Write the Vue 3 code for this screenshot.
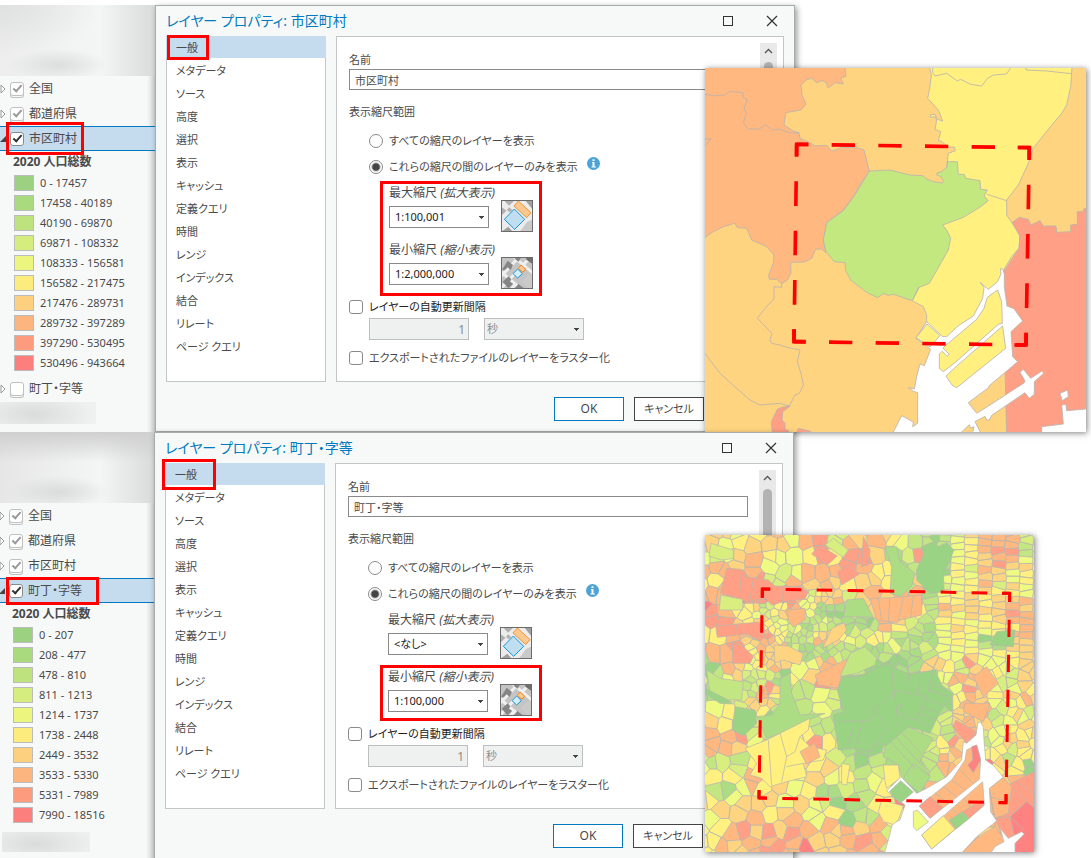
<script setup>
const palette = ['#9bd384', '#acdc84', '#c2e782', '#d8ef80', '#effa82', '#fff080', '#ffd480', '#ffb880', '#ff9f85', '#ff8282']
const swatches = ['#9bd181', '#a9da7e', '#bee37e', '#d5ed7e', '#ecf67e', '#fcec7e', '#fcd07e', '#fcb57e', '#fc9b7e', '#fc7f7e']

const navItems = ['一般', 'メタデータ', 'ソース', '高度', '選択', '表示', 'キャッシュ', '定義クエリ', '時間', 'レンジ', 'インデックス', '結合', 'リレート', 'ページ クエリ']

const scenes = [
  {
    id: 'city',
    title: '市区町村',
    layers: [
      { name: '全国', dim: true, checked: true },
      { name: '都道府県', dim: true, checked: true },
      { name: '市区町村', selected: true, checked: true }
    ],
    classes: ['0 - 17457', '17458 - 40189', '40190 - 69870', '69871 - 108332', '108333 - 156581', '156582 - 217475', '217476 - 289731', '289732 - 397289', '397290 - 530495', '530496 - 943664'],
    after: [{ name: '町丁・字等', dim: true, checked: false }],
    max: '1:100,001',
    min: '1:2,000,000'
  },
  {
    id: 'town',
    title: '町丁・字等',
    layers: [
      { name: '全国', dim: true, checked: true },
      { name: '都道府県', dim: true, checked: true },
      { name: '市区町村', dim: true, checked: true },
      { name: '町丁・字等', selected: true, checked: true }
    ],
    classes: ['0 - 207', '208 - 477', '478 - 810', '811 - 1213', '1214 - 1737', '1738 - 2448', '2449 - 3532', '3533 - 5330', '5331 - 7989', '7990 - 18516'],
    after: [],
    max: '<なし>',
    min: '1:100,000'
  }
]

// Population class of each block of the town map, 41 units per block.
const blocks = [
  '654676577377664312467773',
  '446764558578623701456765',
  '776753467787651201546645',
  '588833767656762613456454',
  '778888746646777714565666',
  '876535741122777626565677',
  '887654323211175315654567',
  '577675226633541214541165',
  '778566211221111124564556',
  '177466456732101156374436',
  '336231567700000014677345',
  '133376223300000003576456',
  '552662123300000001677254',
  '650311132200000113676345',
  '677321552200000232883465',
  '765455576510021135665535',
  '332555655210111237689550',
  '553655567352251127666688',
  '313655451133350077677788',
  '655754633112558887777788',
  '466756744512255555577789',
  '567676776776635555777899',
  '576777786677736555778899'
]

// Number of towns inside each block.
const density = (c, r) => {
  if (c >= 3 && c <= 9 && r >= 4 && r <= 8) return 4
  if (c >= 3 && c <= 5 && r >= 9 && r <= 12) return 3
  if (c >= 16 && r <= 16) return 2
  if (c >= 9 && c <= 18 && r >= 5 && r <= 9) return 2
  return 1
}

let seed = 20201
const rnd = () => {
  seed = (seed * 1103515245 + 12345) % 2147483648
  return seed / 2147483648
}

const sites = []
for (let r = -1; r < 24; r++) {
  for (let c = -1; c < 25; c++) {
    const n = density(c, r)
    const row = blocks[Math.min(22, Math.max(0, r))]
    const base = Number(row[Math.min(23, Math.max(0, c))])
    for (let k = 0; k < n; k++) {
      // Two towns in a block lie one over the other, as the street blocks do.
      const cols = n > 2 ? 2 : 1
      const rows = n > 1 ? 2 : 1
      const w = 41 / cols
      const h = 41 / rows
      const jitter = c >= 17 && r < 9 ? 0.15 : 0.9
      const x = 15 + c * 41 + w * ((k % cols) + 0.5 + (rnd() - 0.5) * jitter) + (n === 1 && r % 2 ? 8 : 0)
      const y = 15 + r * 41 + h * (Math.floor(k / cols) + 0.5 + (rnd() - 0.5) * jitter) + (c >= 17 ? (c - 17) * 4 : 0)
      const t = rnd()
      const shift = base === 0 ? 0 : t < 0.16 ? -1 : t > 0.84 ? 1 : 0
      sites.push({ x, y, k: Math.min(9, Math.max(0, base + shift)) })
    }
  }
}

// Cell of one site: a square cut by the bisector to every nearby site.
const cellOf = (s) => {
  let poly = [[s.x - 60, s.y - 60], [s.x + 60, s.y - 60], [s.x + 60, s.y + 60], [s.x - 60, s.y + 60]]
  for (const o of sites) {
    const dx = o.x - s.x
    const dy = o.y - s.y
    if (o === s || Math.abs(dx) > 120 || Math.abs(dy) > 120) continue
    const mid = (dx * (o.x + s.x) + dy * (o.y + s.y)) / 2
    const out = []
    for (let i = 0; i < poly.length; i++) {
      const a = poly[i]
      const b = poly[(i + 1) % poly.length]
      const da = a[0] * dx + a[1] * dy - mid
      const db = b[0] * dx + b[1] * dy - mid
      if (da <= 0) out.push(a)
      if (da < 0 !== db < 0) {
        const f = da / (da - db)
        out.push([a[0] + (b[0] - a[0]) * f, a[1] + (b[1] - a[1]) * f])
      }
    }
    poly = out
    if (!poly.length) break
  }
  return poly
}

const towns = palette.map((fill, k) => ({
  fill,
  d: sites
    .filter((s) => s.k === k)
    .map((s) => 'M' + cellOf(s).map((p) => p[0].toFixed(1) + ',' + p[1].toFixed(1)).join('L') + 'Z')
    .join('')
}))
</script>

<template>
  <main class="page">
    <section v-for="s in scenes" :key="s.id" class="scene" :class="s.id">
      <aside class="contents">
        <div class="smudge top"></div>
        <label v-for="l in s.layers" :key="l.name" class="layer" :class="{ selected: l.selected, dim: l.dim }">
          <svg class="twisty" viewBox="0 0 6 10">
            <path v-if="l.selected" d="M6 2v6H0z" fill="#444" />
            <path v-else d="M1 1l4 4-4 4z" fill="#fff" stroke="#999" />
          </svg>
          <input type="checkbox" class="tick" :checked="l.checked" />
          <span>{{ l.name }}</span>
        </label>
        <h3 class="legend-title">2020 人口総数</h3>
        <ul class="legend">
          <li v-for="(c, i) in s.classes" :key="c">
            <svg class="swatch" viewBox="0 0 20 16"><rect x="0.5" y="0.5" width="19" height="15" :fill="swatches[i]" stroke="#bcbcbc" /></svg>
            <span>{{ c }}</span>
          </li>
        </ul>
        <label v-for="l in s.after" :key="l.name" class="layer dim last">
          <svg class="twisty" viewBox="0 0 6 10"><path d="M1 1l4 4-4 4z" fill="#fff" stroke="#999" /></svg>
          <input type="checkbox" class="tick" :checked="l.checked" />
          <span>{{ l.name }}</span>
        </label>
        <div class="smudge bottom"></div>
      </aside>

      <div class="dialog" role="dialog" :aria-labelledby="s.id + '-title'">
        <header class="titlebar">
          <h2 :id="s.id + '-title'">レイヤー プロパティ: {{ s.title }}</h2>
          <button type="button" class="win" aria-label="最大化">
            <svg viewBox="0 0 12 12"><rect x="1.5" y="1.5" width="9" height="9" fill="none" stroke="#333" /></svg>
          </button>
          <button type="button" class="win" aria-label="閉じる">
            <svg viewBox="0 0 12 12"><path d="M1 1l10 10M11 1L1 11" fill="none" stroke="#333" stroke-width="1.2" /></svg>
          </button>
        </header>

        <div class="body">
          <nav class="pages">
            <a v-for="(n, i) in navItems" :key="n" href="#" :class="{ current: i === 0 }">{{ n }}</a>
          </nav>
          <div class="panel">
            <form class="fields" @submit.prevent>
              <label class="line small" :for="s.id + '-name'">名前</label>
              <input :id="s.id + '-name'" class="name" type="text" :value="s.title" />
              <h4 class="line small">表示縮尺範囲</h4>
              <label class="choice first"><input type="radio" :name="s.id + '-range'" /><span>すべての縮尺のレイヤーを表示</span></label>
              <label class="choice">
                <input type="radio" :name="s.id + '-range'" checked /><span>これらの縮尺の間のレイヤーのみを表示</span>
                <svg class="info" viewBox="0 0 13 13"><circle cx="6.5" cy="6.5" r="6.5" fill="#4ba3d6" /><path d="M5 5h2.5v4.5H9v1H4.500v-1H5.500V6H5zM5.500 2.300h2v1.700h-2z" fill="#fff" /></svg>
              </label>
              <div class="scale">
                <div class="pick">
                  <label class="line" :for="s.id + '-max'">最大縮尺 <em>(拡大表示)</em></label>
                  <select :id="s.id + '-max'"><option>{{ s.max }}</option></select>
                </div>
                <svg class="thumb" viewBox="0 0 96 96">
                  <rect width="96" height="96" fill="#ececec" />
                  <path d="M8 0h34L24 17zM0 20l17 12L0 48zM24 22l10 8-8 7-8-7z" fill="#b0b0b0" />
                  <path d="M72 0h24v30zM0 96l22-16 14 16z" fill="#a0a0a0" />
                  <path d="M56 96l22-30 18-8v38z" fill="#c9c9c9" />
                  <path d="M40 27l31 31-30 30-31-30z" fill="#c0def2" stroke="#1b95cf" stroke-width="3" />
                  <path d="M52 3l38 35-13 15-38-35z" fill="#fbc98f" stroke="#ee9434" stroke-width="3" />
                  <rect x="1.500" y="1.500" width="93" height="93" fill="none" stroke="#6b6b6b" stroke-width="3" />
                </svg>
              </div>
              <div class="scale">
                <div class="pick">
                  <label class="line" :for="s.id + '-min'">最小縮尺 <em>(縮小表示)</em></label>
                  <select :id="s.id + '-min'"><option>{{ s.min }}</option></select>
                </div>
                <svg class="thumb" viewBox="0 0 96 96">
                  <rect width="96" height="96" fill="#c4c4c4" />
                  <path d="M0 44l96 84M32 -6l80 68M-6 100L106 -18M-4 62L60 -6M28 100l18-22" stroke="#f0f0f0" stroke-width="9" fill="none" />
                  <path d="M3 38l17-27 16 13-7 15-9-8-9 9zM38 0h23l-8 14-8-6zM5 74l18-16 8 9-4 7 9 6-14 14zM40 96l12-15 20 15z" fill="#858585" />
                  <path d="M75 0h21v22l-20-14z" fill="#6f6f6f" />
                  <path d="M62 72l24-22 10 4v42H84z" fill="#cacaca" />
                  <path d="M50 36l14 14-14 13-14-13z" fill="#d5edf8" stroke="#1b95cf" stroke-width="3" />
                  <path d="M60 24l14 12-8 10-14-12z" fill="#fbc98f" stroke="#ee8424" stroke-width="3" />
                  <rect x="1.500" y="1.500" width="93" height="93" fill="none" stroke="#6b6b6b" stroke-width="3" />
                </svg>
              </div>
              <label class="choice box strong"><input type="checkbox" /><span>レイヤーの自動更新間隔</span></label>
              <div class="interval">
                <input type="text" value="1" disabled aria-label="更新間隔" />
                <select disabled aria-label="単位"><option>秒</option></select>
              </div>
              <label class="choice box"><input type="checkbox" /><span>エクスポートされたファイルのレイヤーをラスター化</span></label>
            </form>
            <div class="scroller">
              <svg viewBox="0 0 17 17"><path d="M5 10l3.500-3.500L12 10" fill="none" stroke="#555" stroke-width="1.300" /></svg>
              <i></i>
            </div>
          </div>
        </div>

        <footer class="actions">
          <button type="button" class="ok">OK</button>
          <button type="button" class="small">キャンセル</button>
        </footer>
      </div>

      <span class="mark mark-page"></span>
      <span class="mark mark-layer"></span>
      <span class="mark mark-scale"></span>

      <svg v-if="s.id === 'city'" class="map" viewBox="15 24 1143 1092" role="img" aria-label="市区町村の地図">
        <rect x="15" y="24" width="1143" height="1092" fill="#ffd480" />
        <g stroke="#b9b3ae" stroke-width="2.500" stroke-linejoin="round">
          <path fill="#ffb880" d="M5 10H433L438 48 422 55 430 72 405 68 385 84 377 66 365 62 350 68 335 55 318 60 303 75 306 105 318 132 303 150 257 158 252 195 280 213 297 218 300 235 330 248 345 258 380 256 395 274 425 262 470 263 492 270 508 333 500 347 485 365 460 410 430 450 380 488 370 545 378 578 365 567 347 568 335 595 315 606 272 607 273 640 262 660 245 671 230 658 208 658 206 645 220 610 222 585 200 560 155 540 140 505 112 503 105 490 70 500 40 515 5 540Z" />
          <path fill="#fff080" d="M686 10H1117L1112 80 1100 135 1085 160 1035 220 1000 265 985 310 955 375 920 420 920 465 960 525 957 565 935 590 905 640 895 700 800 850 648 835 680 785 680 765 670 740 637 722 700 600 728 495 790 400 740 322 745 280 766 272 764 262 745 262 725 244 715 242 722 215 705 208 710 180 705 170 692 172 692 164 705 163 712 178 728 183 715 150 683 115 690 80 694 45Z" />
          <path fill="#c4e880" d="M508 333L570 330 630 345 668 347 680 357 700 365 727 369 730 362 722 350 710 345 712 338 725 335 742 320 742 305 772 305 775 343 793 343 797 355 840 362 842 388 862 390 852 408 865 422 838 443 790 472 728 495 740 510 752 535 745 570 688 670 655 683 637 722 580 703 565 706 550 700 533 713 500 697 452 660 437 632 435 608 403 605 378 575 370 540 380 488 430 452 465 405 498 350Z" />
          <path fill="#ff9f85" d="M1170 443L1150 447 1150 455 1132 455 1132 493 1112 495 1112 515 1070 517 1068 498 1030 498 1020 482 993 495 985 478 958 472 937 487 960 530 957 565 908 640 920 1130H1170Z" />
          <path fill="#ff9f85" d="M270 1038L245 1042 232 1048 214 1085 218 1130H262L266 1112 255 1108 255 1090 246 1080 248 1055ZM285 1130L295 1105 333 1114V1130Z" />
          <path fill="#fff" d="M901 626L908 627 913 642 913 680 921 738 942 746 968 783 933 815 938 890 953 905 930 925 870 975 863 985 805 1028 830 1060 862 1040 972 969 975 963 960 937 970 928 992 955 1026 933 1031 940 1003 965 1003 1003 988 1015 975 998 875 1066 868 1080 860 1080 855 1069 825 1085 848 1130H573L605 1067 640 1086 638 1100 653 1090 653 998 640 994 625 983 643 987 650 950 660 912 673 917 692 868 648 835 680 785 728 830 740 830 775 797 820 768 848 715 852 682 840 667 865 688 893 665 903 642Z" />
          <path fill="#fff080" d="M648 833L681 792 720 827 690 861ZM735 858L830 778 852 745 862 712 893 690 905 725 907 790 895 793 765 908 730 935 718 925 718 882 727 874 741 889 748 883 729 864ZM738 948L768 920 908 798 917 865 770 983 756 975Z" />
          <path fill="#fff" d="M1025 1100L1090 1092 1085 1035 1098 1033 1100 1052 1170 1046V1130H1025ZM1080 1000L1103 990 1105 1010 1087 1022Z" />
          <path fill="#ffd480" d="M770 1130L808 1094 812 1104 822 1100 815 1130Z" />
          <path fill="none" d="M5 101L40 107 70 107 90 94 128 98 130 113 142 118 132 145 139 160 130 188 145 207 178 207 197 194 215 210 240 207 265 218 297 220M5 238L33 236 17 255M698 10V38L705 48 740 40 772 63 782 58 812 73 845 78 863 55 880 45 920 42 935 18M978 15V30L1040 33 1115 41M862 403L920 422M5 868L60 940 110 985 150 1020 180 1035 240 1030 268 1038 285 1005 298 1000 310 975 303 940 292 905 300 870 260 862 240 855 215 850 210 840 216 820 172 775 195 745 222 716 222 680 245 682V671" />
        </g>
        <g class="dashes" stroke-width="11">
          <path stroke-dasharray="70 70" stroke-dashoffset="35" d="M290 253L988 263M282 845L978 855" />
          <path stroke-dasharray="74 74" stroke-dashoffset="37" d="M290 253L282 845M988 263L978 855" />
          <path d="M290 288V253H325M953 262.500H988V298M978 820V855H943M317 845H282V808" />
        </g>
      </svg>

      <svg v-else class="map" viewBox="15 15 987 951" role="img" aria-label="町丁・字等の地図">
        <g stroke="#b9b7ac" stroke-width="2.200" stroke-linejoin="round">
          <path v-for="t in towns" :key="t.fill" :d="t.d" :fill="t.fill" />
          <path fill="#ff9f85" d="M80 115L125 118 135 140 205 150 225 168 300 170 325 185 315 207 250 215 215 225 195 205 140 215 62 190ZM47 288L110 282 190 275 195 320 180 333 140 312 52 322ZM98 338L125 345 160 380 150 400 97 400ZM412 125L445 105 478 132 450 150 425 165ZM358 45L412 78 382 105 335 72ZM490 20L510 60 505 105 485 110Z" />
          <path fill="none" d="M125 118L118 205M160 145L150 212M250 170L248 215M110 282L105 318" />
          <path fill="#ffb880" d="M510 205L575 203 665 195 665 255 600 270 590 278 530 270ZM262 240L315 235 315 270 280 292 265 270ZM345 435L445 385 448 420 425 440 415 475 355 465Z" />
          <path fill="none" d="M535 205L545 272M570 203L565 275M610 200L595 275M640 198L632 262" />
          <path fill="#d8ef80" d="M33 40L100 60 100 85 65 90 27 78ZM62 195L128 208 128 240 58 240ZM375 45L400 25 445 60 430 82Z" />
          <path fill="#acdc84" d="M440 210L490 205 520 262 430 260ZM555 50L590 50 600 95 645 130 635 170 600 200 570 190 575 110Z" />
          <path fill="#9bd384" d="M665 50L700 35 715 50 740 38 762 60 745 100 730 125 732 185 690 190 650 150 650 120 670 75ZM890 305L945 300 940 350 870 345Z" />
          <path fill="#ffd480" d="M368 355L395 295 432 278 440 300 415 330ZM222 345L265 348 310 372 300 405 250 390 225 398Z" />
          <path fill="#c2e782" d="M20 420L60 445 130 455 125 510 80 510 30 490ZM450 370L495 350 530 385 525 405 470 430 420 440Z" />
          <path fill="#9bd384" d="M105 530L165 540 170 580 130 618 97 600ZM15 475L75 505 100 522 60 520 15 490Z" />
          <path fill="#acdc84" d="M240 445L270 430 275 490 300 555 375 550 325 570 280 600 240 610 200 625 170 560 215 555 240 520Z" />
          <path fill="#9bd384" d="M530 415L565 400 580 412 625 432 705 420 725 465 760 492 720 545 690 610 625 590 600 645 580 660 540 640 510 665 460 655 415 660 400 555 430 545 412 480 425 440 475 440Z" />
          <path fill="none" d="M580 412L575 460 582 480 570 500 525 535 510 570 490 572 415 575M582 480L680 500 700 420M582 480L595 590M625 432L630 485M525 535L560 600 510 665M680 500L650 570 610 560 600 520M460 590L440 650M490 572L465 650M650 570L690 590M665 530L715 548M655 550L705 570M675 510L730 525M690 460L735 480M685 480L745 500M660 425L655 490" />
          <path fill="#acdc84" d="M555 650L625 590 700 625 660 690 690 740 660 790 605 745 595 705 550 680Z" />
          <path fill="none" d="M572 635L650 720M588 622L665 705M605 608L665 670M690 740L640 700 610 745" />
          <path fill="#fff080" d="M135 655L200 630 240 610 330 565 325 600 300 620 330 650 380 660 370 690 310 700 320 740 260 755 210 770 185 745 150 735 170 700ZM550 705L595 705 600 745 560 775 555 755ZM425 700L450 705 440 765 425 762Z" />
          <path fill="none" d="M205 630L215 765M240 610L260 680 245 755M300 620L285 665 260 680M310 700L260 710" />
          <path fill="#ffb880" d="M300 665L345 640 360 680 320 703ZM795 520L870 520 850 575 790 545ZM820 440L860 410 895 460 850 500Z" />
          <path fill="#ff9f85" d="M768 570L828 605 800 640 758 590Z" />
          <path fill="#ff9f85" d="M870 790L935 760 1010 720V980H900V900L880 850Z" />
          <path fill="#ffb880" d="M868 775L910 742 935 770 925 850 885 865ZM885 890L830 925 775 980H900L915 930Z" />
          <path fill="#ff8282" d="M980 815L1010 840V980H945L945 925 930 860Z" />
          <path fill="none" d="M870 800L925 815M935 770L980 815 930 860 970 900M930 860L885 865M950 755L1002 790" />
          <path fill="#fff" d="M834 578L842 576 850 592 852 630 857 690 882 708 910 742 868 775 872 845 890 873 830 920 775 980H550L565 930 578 880 600 870 615 825 560 783 603 740 650 790 680 775 740 740 785 690 790 635 800 640 828 615 832 590ZM900 895L925 925 965 905 973 912 945 940V980H865L885 950 912 935Z" />
          <path fill="#9bd384" d="M568 785L602 752 640 786 600 820Z" />
          <path fill="#ffb880" d="M658 828L755 750 795 690 800 660 830 645 842 690 838 748 690 865Z" />
          <path fill="#ff9f85" d="M658 828L690 800 728 832 690 865Z" />
          <path fill="#ff8282" d="M815 650L830 645 842 690 820 728 803 705 818 690Z" />
          <path fill="#effa82" d="M640 845L652 840 685 876 650 902 640 890Z" />
          <path fill="#ffb880" d="M665 915L848 755 853 825 695 957Z" />
          <path fill="#fff080" d="M665 915L730 857 765 898 695 957Z" />
          <path fill="#9bd384" d="M748 870L788 845 808 865 768 897Z" />
          <path fill="#ff9f85" d="M788 845L845 812 850 828 808 865Z" />
          <path fill="none" d="M705 788L745 820M730 770L770 800M755 750L795 780M780 720L820 760M755 835L790 865M790 805L815 835" />
          <path fill="#fff080" d="M535 845L545 810 610 828 595 870 580 883 550 875Z" />
        </g>
        <g class="dashes" stroke-width="9">
          <path stroke-dasharray="47 46" stroke-dashoffset="23" d="M187 177L929 190M177 804L918 818" />
          <path stroke-dasharray="52 53" stroke-dashoffset="26" d="M187 177L177 804M929 190L918 818" />
          <path d="M187 203V177H210M906 189.500H929V216M918 792V818H895M200 804H177V780" />
        </g>
      </svg>
    </section>
  </main>
</template>

<style>
body {
  margin: 0;
  background: #fff;
}
</style>

<style scoped>
.page {
  box-sizing: border-box;
  height: 100vh;
  padding-top: 5px;
  overflow: hidden;
  font: 12px/16px "Noto Sans", "Noto Sans CJK JP", sans-serif;
  font-feature-settings: "palt";
  color: #4a4a4a;
}
.scene {
  position: relative;
  display: grid;
  grid-template-columns: 155px minmax(0, 640px);
}
.town {
  grid-template-columns: 154px minmax(0, 640px);
}
input, select, button {
  box-sizing: border-box;
  margin: 0;
  font: inherit;
  font-feature-settings: inherit;
  color: inherit;
  border-radius: 0;
}
h2, h3, h4 {
  margin: 0;
  font-size: 12px;
  font-weight: 400;
}

/* Contents pane */
.contents {
  background: linear-gradient(to left, #cfd1d0, #f7f9f8 8px);
  overflow: hidden;
}
.smudge.top {
  height: 71px;
  background:
    radial-gradient(ellipse 50px 16px at 58px 60px, #dcdddd, transparent),
    radial-gradient(ellipse 100px 50px at 0 0, #dfe0e0, transparent),
    linear-gradient(to right, #ededed, #f4f5f5 100px, #d9dada);
}
.town .smudge.top {
  background:
    radial-gradient(ellipse 50px 16px at 58px 60px, #dadbdb, transparent),
    linear-gradient(#cfcfcf, transparent 30px),
    linear-gradient(to right, #e6e6e6, #f4f5f5 100px, #d9dada);
}
.smudge.bottom {
  width: 96px;
  height: 22px;
  margin-top: 1px;
  background: radial-gradient(ellipse 60px 22px at 34px 12px, #dadcdb, #eff1f0);
}
.town .smudge.bottom {
  width: 88px;
  height: 20px;
  margin: 7px 0 0 2px;
}
.layer {
  display: flex;
  align-items: center;
  box-sizing: border-box;
  height: 25px;
  border: solid transparent;
  border-width: 1px 0;
}
.layer.selected {
  background: #c5dbee;
  border-color: #0079c1;
}
.layer.last {
  margin-top: 3px;
}
.twisty {
  width: 6px;
  height: 10px;
  margin-right: 4px;
}
.town .twisty {
  margin-left: -1px;
}
.tick, .box input {
  appearance: none;
  flex: none;
  position: relative;
  width: 14px;
  height: 14px;
  background: #fff;
  border: 1px solid #8a8a8a;
  border-radius: 3px;
}
.tick {
  margin-right: 5px;
}
.tick:checked::before {
  content: "";
  position: absolute;
  left: 2px;
  top: 2px;
  width: 7px;
  height: 3px;
  border: solid #333;
  border-width: 0 0 2px 2px;
  transform: rotate(-48deg);
}
.dim .tick {
  border-color: #c0c0c0;
  box-shadow: 0 2px 0 -1px #f7f9f8, 0 2px 0 #c0c0c0;
}
.dim .tick:checked::before {
  border-color: #999;
}
.legend-title {
  padding-left: 13px;
  font-weight: 700;
  line-height: 22px;
}
.legend {
  margin: 0;
  padding: 0 0 0 14px;
  list-style: none;
  font-size: 11px;
}
.town .legend-title {
  padding-left: 12px;
}
.town .legend {
  padding-left: 13px;
}
.legend li {
  display: flex;
  align-items: center;
  gap: 6px;
  height: 20px;
}
.swatch {
  width: 20px;
  height: 16px;
}

/* Dialog */
.dialog {
  box-sizing: border-box;
  padding: 0 10px 10px;
  background: #f7f9f8;
  border: 1px solid #a8abac;
  box-shadow: 2px 2px 6px rgba(0, 0, 0, 0.4);
}
.titlebar {
  display: flex;
  align-items: center;
  height: 30px;
}
.titlebar h2 {
  flex: 1;
  font-size: 14px;
  color: #0079c1;
}
.win {
  width: 44px;
  height: 24px;
  padding: 0;
  background: none;
  border: 0;
}
.win:last-child {
  margin-right: -10px;
}
.win svg {
  display: block;
  width: 12px;
  height: 12px;
  margin: 0 auto;
}
.body {
  display: flex;
  gap: 10px;
}
.pages, .panel {
  box-sizing: border-box;
  background: #fff;
  border: 1px solid #c3c5c6;
}
.pages {
  flex: 0 0 160px;
  font-size: 11px;
}
.pages a {
  display: block;
  padding-left: 9px;
  line-height: 23px;
  color: inherit;
  text-decoration: none;
}
.pages a.current {
  height: 22px;
  margin: -1px -1px 1px;
  padding-left: 10px;
  background: #c5dbee;
}
.panel {
  flex: 1;
  display: flex;
  min-width: 0;
  padding: 6px 6px 15px 12px;
}
.fields {
  flex: 1;
  padding-top: 9px;
}
.line {
  display: block;
}
.small {
  font-size: 11px;
}
.name {
  display: block;
  width: calc(100% - 11px);
  height: 21px;
  margin: 1px 0 14px;
  padding: 0 5px;
  font-size: 11px;
  background: #fff;
  border: 1px solid #8a8a8a;
}
.choice {
  display: flex;
  align-items: center;
  gap: 6px;
  height: 16px;
  margin: 10px 0 0 20px;
  font-size: 11px;
  white-space: nowrap;
}
.choice.first {
  margin-top: 13px;
}
.choice.box {
  margin-left: 0;
}
.strong {
  color: #222;
}
input[type="radio"] {
  appearance: none;
  width: 14px;
  height: 14px;
  background: #fff;
  border: 1px solid #8a8a8a;
  border-radius: 50%;
}
input[type="radio"]:checked {
  background: radial-gradient(circle, #444 3px, #fff 5px);
}
.info {
  width: 13px;
  height: 13px;
  margin: 0 0 8px 3px;
}
.scale {
  display: flex;
  align-items: flex-end;
  gap: 12px;
  height: 47px;
  margin: 10px 0 0 40px;
}
.pick {
  width: 100px;
  padding-bottom: 4px;
  white-space: nowrap;
}
select {
  appearance: none;
  width: 100px;
  height: 22px;
  padding: 0 5px;
  font-size: 11px;
  color: #222;
  background:
    conic-gradient(from -45deg at 50% 100%, #444 90deg, transparent 0) right 4px center / 5px 3px no-repeat,
    #fff;
  border: 1px solid #8a8a8a;
}
.pick select {
  display: block;
  margin-top: 5px;
}
.thumb {
  width: 32px;
  height: 32px;
}
.interval {
  display: flex;
  gap: 15px;
  margin: 3px 0 0 20px;
}
.interval input {
  width: 100px;
  height: 22px;
  padding: 0 3px;
  text-align: right;
}
.interval input, .interval select {
  color: #8c8c8c;
  background-color: #eff0f0;
  border: 1px solid #bcbec0;
}
.interval select {
  padding: 0 2px;
  opacity: 1;
}
.scroller {
  flex: 0 0 17px;
  background: #e9e9e9;
}
.scroller svg {
  display: block;
  width: 17px;
  height: 17px;
}
.scroller i {
  display: block;
  width: 9px;
  height: 120px;
  margin: 2px auto 0;
  background: #b3b3b3;
  border-radius: 5px;
}
.actions {
  display: flex;
  justify-content: flex-end;
  gap: 10px;
  margin: 15px 80px 0 0;
}
.actions button {
  width: 70px;
  height: 24px;
  padding: 0;
  background: #fff;
  border: 1px solid #444;
}
.actions .small {
  font-size: 11px;
}
.actions .ok {
  border-color: #0079c1;
}

/* Call-outs and maps laid over the windows */
.mark {
  position: absolute;
  box-sizing: border-box;
  border: 3px solid #f00;
}
.city .mark-page {
  left: 167px;
  top: 30px;
  width: 42px;
  height: 25px;
}
.city .mark-layer {
  left: 6px;
  top: 117px;
  width: 78px;
  height: 33px;
}
.city .mark-scale {
  left: 380px;
  top: 176px;
  width: 162px;
  height: 115px;
}
.town .mark-page {
  left: 162px;
  top: 27px;
  width: 54px;
  height: 31px;
}
.town .mark-layer {
  left: 6px;
  top: 145px;
  width: 93px;
  height: 28px;
}
.town .mark-scale {
  left: 380px;
  top: 233px;
  width: 162px;
  height: 56px;
}
.map {
  position: absolute;
  left: 705px;
  top: 63px;
  width: 381px;
  height: 364px;
  box-shadow: 1px 1px 6px rgba(0, 0, 0, 0.5);
}
.town .map {
  top: 103px;
  width: 329px;
  height: 317px;
}
.dashes {
  fill: none;
  stroke: #f00;
}
</style>
